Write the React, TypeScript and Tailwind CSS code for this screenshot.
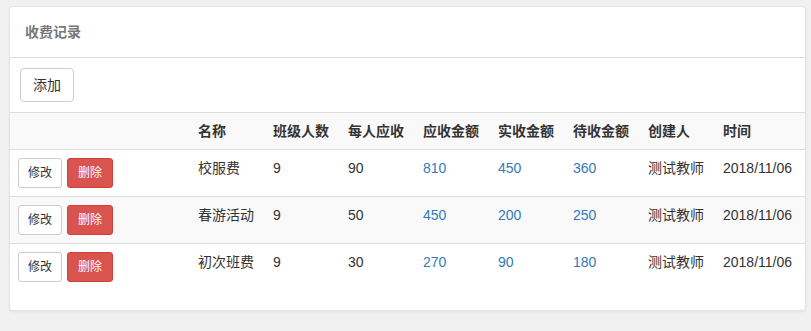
const rows = [
  { name: "校服费", count: 9, per: 90, due: 810, paid: 450, left: 360, by: "测试教师", time: "2018/11/06" },
  { name: "春游活动", count: 9, per: 50, due: 450, paid: 200, left: 250, by: "测试教师", time: "2018/11/06" },
  { name: "初次班费", count: 9, per: 30, due: 270, paid: 90, left: 180, by: "测试教师", time: "2018/11/06" },
];

const heads = ["名称", "班级人数", "每人应收", "应收金额", "实收金额", "待收金额", "创建人", "时间"];

export default function App() {
  return (
    <div
      className="w-[811px] h-[331px] bg-[#f0f0f0] pt-[7px] pl-[10px] text-[14px] text-[#333] overflow-hidden"
      style={{ fontFamily: '"Liberation Sans", "Noto Sans CJK SC", sans-serif' }}
    >
      <div className="w-[795px] bg-white rounded-[3px] shadow-[0_0_0_1px_#e4e4e4,0_1px_3px_rgba(0,0,0,0.12)] pb-[20px]">
        {/* HEADING */}
        <div className="h-[51px] px-[15px] flex items-center border-b border-[#ddd]">
          <span className="text-[14px] font-bold text-[#777]">收费记录</span>
        </div>

        {/* TOOLBAR */}
        <div className="px-[10px] py-[10px] border-b border-[#ddd]">
          <button className="h-[34px] px-[12px] border border-[#ccc] rounded-[4px] bg-white text-[#333] leading-[20px]">
            添加
          </button>
        </div>

        {/* TABLE */}
        <table className="w-full border-collapse table-fixed">
          <colgroup>
            <col className="w-[180px]" />
            <col className="w-[75px]" />
            <col className="w-[75px]" />
            <col className="w-[75px]" />
            <col className="w-[75px]" />
            <col className="w-[75px]" />
            <col className="w-[75px]" />
            <col className="w-[75px]" />
            <col />
          </colgroup>
          <thead>
            <tr className="bg-[#f9f9f9]">
              <th className="h-[36px] px-[8px] border-b border-[#ddd]"></th>
              {heads.map((h) => (
                <th key={h} className="px-[8px] text-left font-bold leading-[20px] border-b border-[#ddd] whitespace-nowrap">
                  {h}
                </th>
              ))}
            </tr>
          </thead>
          <tbody>
            {rows.map((r, i) => (
              <tr key={r.name} className={i % 2 === 1 ? "bg-[#f9f9f9]" : "bg-white"}>
                <td className={"p-[8px] align-top " + (i < 2 ? "border-b border-[#ddd]" : "")}>
                  <div className="flex gap-[5px]">
                    <button className="h-[30px] px-[9px] border border-[#ccc] rounded-[3px] bg-white text-[12px] text-[#333]">
                      修改
                    </button>
                    <button className="h-[30px] px-[10px] border border-[#d43f3a] rounded-[3px] bg-[#d9534f] text-[12px] text-white">
                      删除
                    </button>
                  </div>
                </td>
                {[r.name, r.count, r.per].map((v, j) => (
                  <td key={j} className={"px-[8px] pt-[8px] align-top leading-[20px] whitespace-nowrap " + (i < 2 ? "border-b border-[#ddd]" : "")}>
                    {v}
                  </td>
                ))}
                {[r.due, r.paid, r.left].map((v, j) => (
                  <td key={"n" + j} className={"px-[8px] pt-[8px] align-top leading-[20px] text-[#337ab7] " + (i < 2 ? "border-b border-[#ddd]" : "")}>
                    {v}
                  </td>
                ))}
                <td className={"px-[8px] pt-[8px] align-top leading-[20px] whitespace-nowrap " + (i < 2 ? "border-b border-[#ddd]" : "")}>
                  {r.by}
                </td>
                <td className={"px-[8px] pt-[8px] align-top leading-[20px] whitespace-nowrap " + (i < 2 ? "border-b border-[#ddd]" : "")}>
                  {r.time}
                </td>
              </tr>
            ))}
          </tbody>
        </table>
      </div>
    </div>
  );
}
